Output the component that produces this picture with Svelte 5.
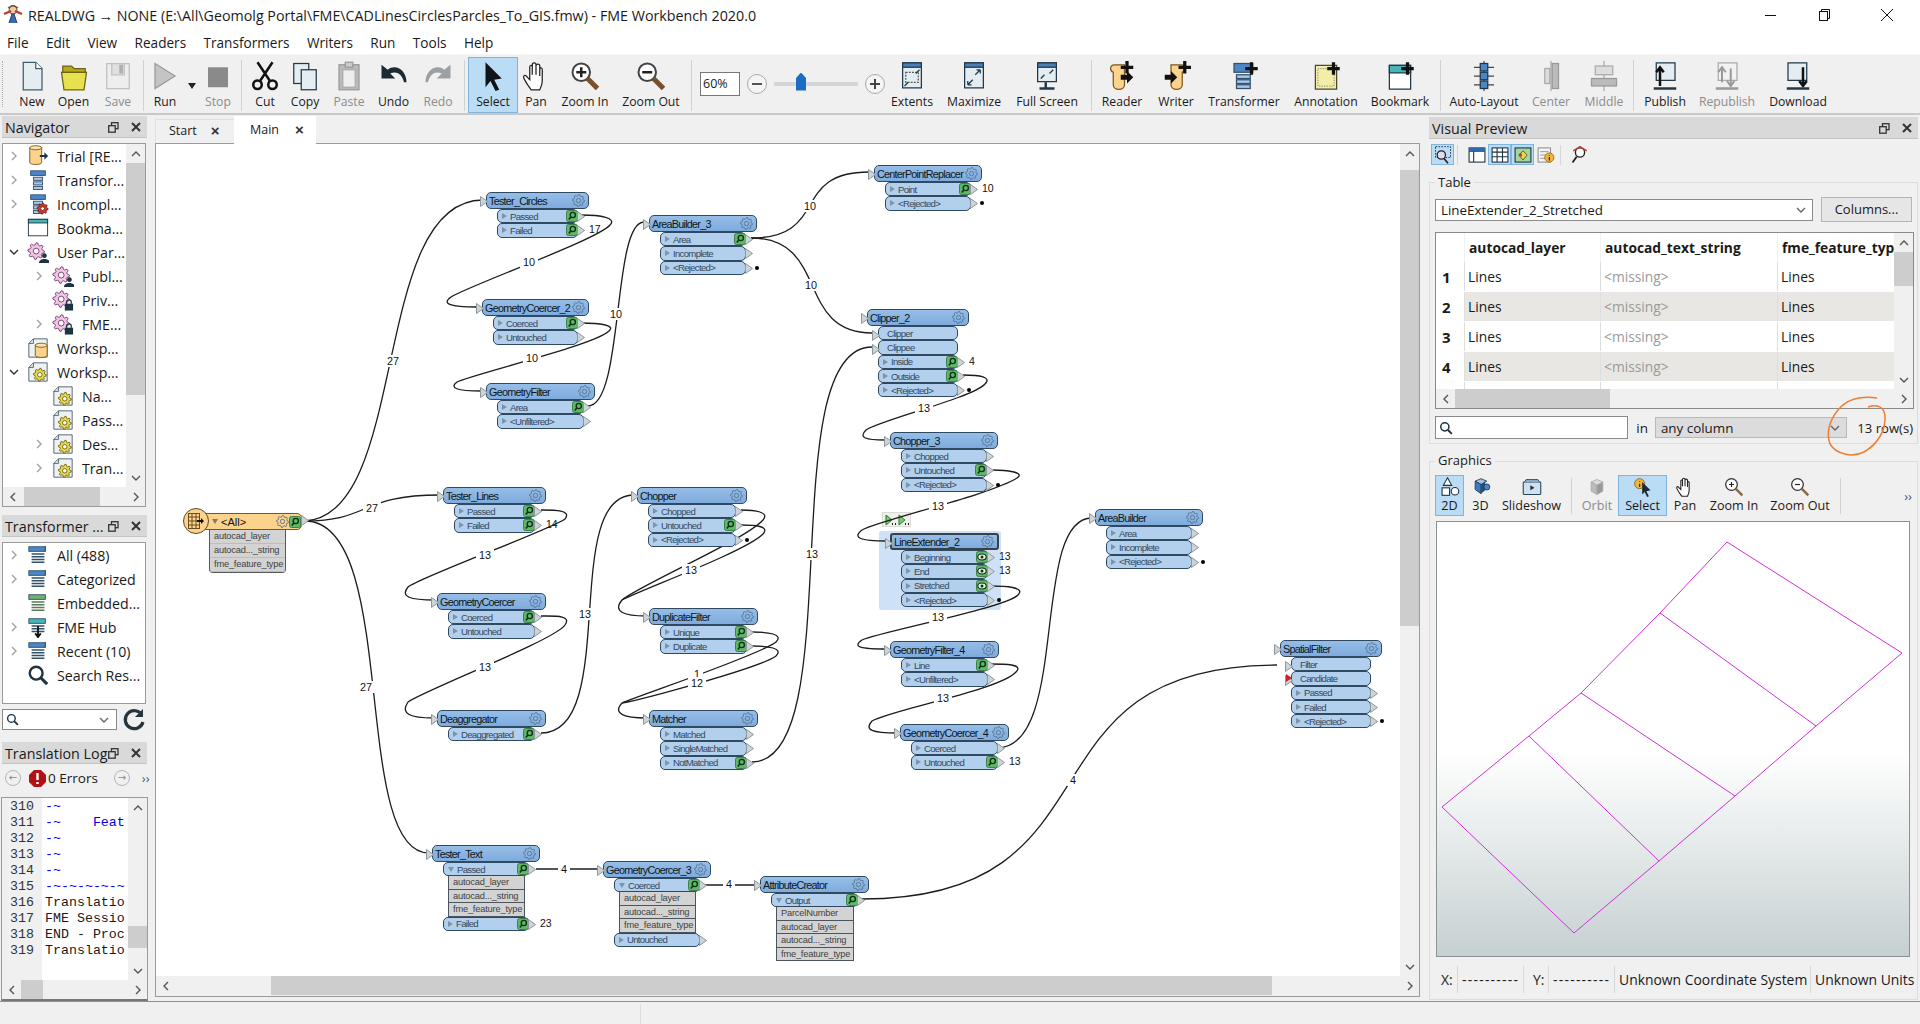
<script>
	// gear outline as polygon points
	function gear(cx, cy, r1, r2, n = 8) {
		const pts = [];
		for (let i = 0; i < n * 4; i++) {
			const a = (i / (n * 4)) * Math.PI * 2;
			const r = i % 4 < 2 ? r2 : r1;
			pts.push((cx + Math.cos(a) * r).toFixed(1) + ',' + (cy + Math.sin(a) * r).toFixed(1));
		}
		return pts.join(' ');
	}
	const gearA = (cx, cy, r, fill, st) =>
		`<polygon points="${gear(cx, cy, r * 0.75, r)}" fill="${fill}" stroke="${st}"/><circle cx="${cx}" cy="${cy}" r="${r * 0.35}" fill="#fff" stroke="${st}"/>`;
	const plus = (x, y) => `<path d="M${x} ${y - 5}v10M${x - 5} ${y}h10" stroke="#111" stroke-width="2.6"/>`;
	const win = (hd = '#4a7fb5') =>
		`<rect x="4.5" y="1.5" width="15" height="20" fill="#e4edf1" stroke="#20384a"/><rect x="4.5" y="1.5" width="15" height="3.5" fill="${hd}" stroke="#20384a"/>`;
	const stack = (a, b) =>
		`<rect x="4" y="2" width="16" height="5" fill="${a}" stroke="#33506a"/><rect x="7" y="9" width="10" height="3.4" fill="${b}" stroke="#33506a"/><rect x="7" y="14" width="10" height="3.4" fill="${b}" stroke="#33506a"/><rect x="7" y="19" width="10" height="3.4" fill="${b}" stroke="#33506a"/>`;
	const page = `<path d="M2 7l5-5h15v20H2z" fill="#eef2f4" stroke="#4a5f6b"/><path d="M7 2v5H2" fill="none" stroke="#4a5f6b"/>`;
	const cyl = (x, y, w, h) =>
		`<path d="M${x} ${y + 2}v${h - 4}c0 3 ${w} 3 ${w} 0v-${h - 4}z" fill="#fbd38d" stroke="#7a5a20"/><ellipse cx="${x + w / 2}" cy="${y + 2}" rx="${w / 2}" ry="2.2" fill="#fde3b0" stroke="#7a5a20"/>`;
	const user = `<circle cx="19" cy="16" r="2.6" fill="#1e3442"/><path d="M13 24c0-6 12-6 12 0z" fill="#1e3442"/>`;
	const lock = `<rect x="14" y="16" width="9" height="7.5" fill="#1e3442"/><path d="M16 16v-2c0-3 5-3 5 0v2" fill="none" stroke="#1e3442" stroke-width="1.4"/>`;

	const icons = {
		new: `<path d="M5 1h10l5 5v17H5z" fill="#e4edf1" stroke="#3f5d6b"/><path d="M15 1v5h5" fill="#fff" stroke="#3f5d6b"/>`,
		open: `<path d="M3 9V4h7l2 2h9v3z" fill="#b9a91f" stroke="#6d6415"/><path d="M2 9h20l-2 14H4z" fill="#e7e04f" stroke="#6d6415"/>`,
		save: `<path d="M3 2h18v20H3z" fill="#eee" stroke="#c0c0c0"/><path d="M7 2h10v9H7z" fill="#e0e0e0" stroke="#c0c0c0"/><rect x="13" y="3" width="3" height="7" fill="#b0b0b0"/>`,
		run: `<path d="M4 2l16 10L4 22z" fill="#c4c4c4" stroke="#9a9a9a"/>`,
		stop: `<rect x="4" y="5" width="16" height="16" fill="#8a8a8a"/>`,
		cut: `<path d="M6 1l10 15M18 1L8 16" stroke="#111" stroke-width="2" fill="none"/><circle cx="6" cy="19" r="3.4" fill="none" stroke="#111" stroke-width="2"/><circle cx="18" cy="19" r="3.4" fill="none" stroke="#111" stroke-width="2"/>`,
		copy: `<rect x="3" y="2" width="12" height="16" fill="#e4edf1" stroke="#20384a"/><rect x="9" y="7" width="12" height="16" fill="#e4edf1" stroke="#20384a"/>`,
		paste: `<rect x="4" y="3" width="16" height="20" fill="#bbb" stroke="#999"/><rect x="7" y="7" width="10" height="14" fill="#eee" stroke="#aaa"/><rect x="9" y="1" width="6" height="4" fill="#ccc" stroke="#999"/>`,
		undo: `<path d="M2 3v11h11l-4-4c4-2 9-1 11 7h2C22 7 13 2 7 7z" fill="#1c2a33"/>`,
		redo: `<path d="M22 3v11H11l4-4c-4-2-9-1-11 7H2C2 7 11 2 17 7z" fill="#9aa0a3"/>`,
		select: `<path d="M6 1l13 13-6 1 4 8-3 1-4-8-4 5z" fill="#0e1418"/>`,
		pan: `<path d="M8 23c-2-3-5-7-6-10 0-2 2-2 3 0l2 2V5c0-2 2-2 2 0v6V3c0-2 3-2 3 0v8V4c0-2 3-2 3 0v8V7c0-2 2-2 2 0v9c0 3-1 5-2 7z" fill="#fff" stroke="#222"/>`,
		zoomin: `<circle cx="9" cy="9" r="7" fill="#fff" stroke="#444" stroke-width="1.6"/><path d="M5 9h8M9 5v8" stroke="#222" stroke-width="2"/><path d="M14 14l8 8" stroke="#7a4f2a" stroke-width="4"/>`,
		zoomout: `<circle cx="9" cy="9" r="7" fill="#fff" stroke="#444" stroke-width="1.6"/><path d="M5 9h8" stroke="#222" stroke-width="2"/><path d="M14 14l8 8" stroke="#7a4f2a" stroke-width="4"/>`,
		extents: win() + `<rect x="7" y="9" width="10" height="8" fill="none" stroke="#555" stroke-dasharray="1.5 1"/><path d="M6 20l3-3M18 7l-3 3" stroke="#20384a"/>`,
		maximize: win() + `<path d="M7 19l4-4M7 19v-3M7 19h3M17 7l-4 4M17 7v3M17 7h-3" stroke="#20384a" fill="none"/>`,
		full: `<rect x="4.5" y="1.5" width="15" height="15" fill="#e4edf1" stroke="#20384a"/><rect x="4.5" y="1.5" width="15" height="3.5" fill="#4a7fb5" stroke="#20384a"/><path d="M7 14l3-3M17 7l-3 3" stroke="#20384a"/><path d="M11 17v4M6 22h12" stroke="#20384a" stroke-width="2"/>`,
		reader: `<path d="M6 3c-4 0-4 5-1 6v10c0 5 9 5 9 0V3z" fill="#fbd38d" stroke="#7a5a20"/><path d="M11 11h5v-3l5 5-5 5v-3h-5z" fill="#111"/>` + plus(16, 5),
		writer: `<path d="M16 3c4 0 4 5 1 6v10c0 5-9 5-9 0V3z" fill="#fbd38d" stroke="#7a5a20"/><path d="M3 11h5V8l5 5-5 5v-3H3z" fill="#111"/>` + plus(19, 5),
		transformer: `<rect x="4" y="2" width="15" height="7" fill="#4a86c8" stroke="#33506a"/><rect x="6" y="11" width="11" height="3" fill="#a9c8ea" stroke="#33506a"/><rect x="6" y="15" width="11" height="3" fill="#a9c8ea" stroke="#33506a"/><rect x="6" y="19" width="11" height="3" fill="#a9c8ea" stroke="#33506a"/>` + plus(18, 6),
		annotation: `<rect x="3.5" y="3.5" width="17" height="19" fill="#f3eda6" stroke="#4a4a2a"/><rect x="5.5" y="6" width="13" height="14" fill="none" stroke="#999" stroke-dasharray="1 1"/>` + plus(18, 6),
		bookmark: `<rect x="3.5" y="3.5" width="17" height="19" fill="#fff" stroke="#20384a"/><rect x="3.5" y="3.5" width="17" height="6" fill="#45b5b8" stroke="#20384a"/>` + plus(18, 6),
		autolayout: `<path d="M12 0v24M4 5h16M4 12h16M4 19h16" stroke="#444"/><rect x="9" y="2" width="6" height="6" fill="#4a86c8" stroke="#20384a"/><rect x="9" y="9" width="6" height="6" fill="#4a86c8" stroke="#20384a"/><rect x="9" y="16" width="6" height="6" fill="#4a86c8" stroke="#20384a"/>`,
		center: `<path d="M12 0v24" stroke="#aaa"/><rect x="7" y="6" width="4" height="12" fill="#ddd" stroke="#aaa"/><rect x="13" y="2" width="5" height="20" fill="#bbb" stroke="#999"/>`,
		middle: `<path d="M12 0v24" stroke="#aaa"/><rect x="5" y="4" width="14" height="7" fill="#ddd" stroke="#aaa"/><rect x="2" y="14" width="20" height="6" fill="#bbb" stroke="#999"/>`,
		publish: `<rect x="5" y="1.5" width="15" height="14" fill="#e4edf1" stroke="#20384a"/><path d="M8 20V6M5 9l3-4 3 4" stroke="#111" stroke-width="2" fill="none"/><path d="M3 22h18" stroke="#20384a" stroke-width="2"/>`,
		republish: `<rect x="5" y="1.5" width="15" height="14" fill="#f2f2f2" stroke="#aaa"/><path d="M8 17V6M5 9l3-4 3 4M15 6v13M12 16l3 4 3-4" stroke="#999" stroke-width="1.6" fill="none"/><path d="M3 22h18" stroke="#999" stroke-width="2"/>`,
		download: `<rect x="4" y="1.5" width="15" height="14" fill="#e4edf1" stroke="#20384a"/><path d="M16 5v14M13 16l3 4 3-4" stroke="#111" stroke-width="2" fill="none"/><path d="M3 22h18" stroke="#20384a" stroke-width="2"/>`,
		// tree icons
		db: cyl(3, 1, 13, 20) + `<path d="M14 11h5V8l4 4-4 4v-3h-5z" fill="#1e3442"/>`,
		stack: stack('#4a86c8', '#a9c8ea'),
		stackgear: stack('#4a86c8', '#a9c8ea') + gearA(17, 17, 6, '#d0392b', '#7a1f18'),
		bmark: `<rect x="1.5" y="2.5" width="21" height="18" fill="#fff" stroke="#20384a"/><rect x="1.5" y="2.5" width="21" height="4" fill="#45b5b8" stroke="#20384a"/>`,
		gearuser: gearA(10, 11, 9, '#efc6e6', '#7a3d72') + user,
		gearlock: gearA(10, 11, 9, '#efc6e6', '#7a3d72') + lock,
		wsdb: page + cyl(9, 7, 13, 15),
		wsgear: page + gearA(14, 15, 7, '#e8d94a', '#6d6415'),
		stackblue: `<rect x="2" y="3" width="18" height="5" fill="#4a86c8" stroke="#33506a"/><path d="M5 11h14M5 14h14M5 17h14M5 20h14" stroke="#33506a" stroke-width="1.6"/><path d="M20 2v6" stroke="#33506a"/>`,
		stackgreen: `<rect x="2" y="3" width="18" height="5" fill="#6db36a" stroke="#33506a"/><path d="M5 11h14M5 14h14M5 17h14M5 20h14" stroke="#5a7a5a" stroke-width="1.6"/>`,
		stackteal: `<rect x="2" y="3" width="18" height="5" fill="#45b5b8" stroke="#33506a"/><path d="M5 11h14M5 14h14M5 17h14" stroke="#33506a" stroke-width="1.6"/><path d="M12 11v11M9 19l3 4 3-4" stroke="#111" stroke-width="2" fill="none"/>`,
		search: `<circle cx="10" cy="10" r="7" fill="none" stroke="#1e3442" stroke-width="2.6"/><path d="M15 15l7 7" stroke="#1e3442" stroke-width="3.4"/>`,
		// visual preview toolbar
		preview: `<rect x="3" y="2" width="18" height="13" fill="none" stroke="#222" stroke-dasharray="2 1.5"/><circle cx="10" cy="12" r="5" fill="#dde" stroke="#222" stroke-width="1.5"/><path d="M13 16l5 6" stroke="#222" stroke-width="2"/>`,
		layout: `<rect x="2.5" y="3.5" width="19" height="17" fill="#fff" stroke="#1e3442" stroke-width="1.3"/><path d="M2.5 7.5h19M8 7.5v13" stroke="#1e3442" stroke-width="1.3"/><rect x="2.5" y="3.5" width="19" height="4" fill="#2b6cb0"/>`,
		grid: `<rect x="2.5" y="3.5" width="19" height="17" fill="#fff" stroke="#1e3442" stroke-width="1.3"/><path d="M2.5 8.5h19M2.5 14h19M8.5 3.5v17M15 3.5v17" stroke="#1e3442" stroke-width="1.3"/>`,
		gfx: `<rect x="2.5" y="3.5" width="19" height="17" fill="#a5d6a0" stroke="#1e3442" stroke-width="1.3"/><path d="M7 12l5-5 5 5-5 6z" fill="#e8d94a" stroke="#3a5a20"/><circle cx="9" cy="12" r="2" fill="#c0392b"/>`,
		info: `<rect x="2.5" y="3.5" width="15" height="17" fill="#f3f3f3" stroke="#777"/><path d="M5 8h10M5 12h6M5 16h6" stroke="#888"/><circle cx="16" cy="15" r="5.5" fill="#f0b63c" stroke="#8a6510"/><path d="M16 12v1M16 14.5v4" stroke="#222" stroke-width="1.4"/>`,
		fmeinsp: `<circle cx="12" cy="9" r="5.5" fill="#fff" stroke="#222" stroke-width="1.6"/><path d="M8 14l-5 7" stroke="#222" stroke-width="2.2"/><path d="M4 7l8-5 8 5" stroke="#c0392b" stroke-width="2" fill="none"/>`,
		d2: `<path d="M9 1l5 9H4z" fill="#fff" stroke="#1e3442" stroke-width="1.3"/><rect x="2.5" y="13" width="9" height="9" fill="#fff" stroke="#1e3442" stroke-width="1.3"/><circle cx="18" cy="17" r="4.5" fill="#fff" stroke="#1e3442" stroke-width="1.3"/>`,
		d3: `<path d="M5 5l7-3 7 3-7 4z" fill="#9fc2e6" stroke="#1e3442"/><path d="M5 5v10l7 5V9z" fill="#3a7abd" stroke="#1e3442"/><path d="M12 9v11l5-4V5z" fill="#20507f"/><circle cx="19" cy="12" r="3.6" fill="#4a86c8" stroke="#1e3442"/>`,
		slide: `<rect x="1.5" y="6" width="21" height="15" rx="1" fill="#cfe0ee" stroke="#26465e" stroke-width="1.3"/><path d="M3 6l2-3h14l2 3" fill="#8ea8bc" stroke="#26465e"/><path d="M10 10l5 3-5 3z" fill="#1e3442"/>`,
		orbit: `<path d="M5 6l7-3 7 3-7 4z" fill="#ddd" stroke="#aaa"/><path d="M5 6v11l7 4V10z" fill="#bbb" stroke="#aaa"/><path d="M12 10v11l7-4V6z" fill="#999" stroke="#aaa"/>`,
		gselect: `<circle cx="8" cy="8" r="6" fill="#f0b63c" stroke="#8a6510"/><path d="M8 5v1M8 8v4" stroke="#222" stroke-width="1.4"/><path d="M11 6l10 10-5 1 3 6-2 1-3-6-3 3z" fill="#1c2a33"/>`,
		gpan: `<path d="M8 23c-2-3-5-7-6-10 0-2 2-2 3 0l2 2V5c0-2 2-2 2 0v6V3c0-2 3-2 3 0v8V4c0-2 3-2 3 0v8V7c0-2 2-2 2 0v9c0 3-1 5-2 7z" fill="#fff" stroke="#222" stroke-width="1.3"/>`,
		gzin: `<circle cx="9" cy="9" r="7" fill="#fff" stroke="#333" stroke-width="1.5"/><path d="M6 9h6M9 6v6" stroke="#222" stroke-width="1.4"/><path d="M14 14l8 8" stroke="#8a6a45" stroke-width="3"/>`,
		gzout: `<circle cx="9" cy="9" r="7" fill="#fff" stroke="#333" stroke-width="1.5"/><path d="M6 9h6" stroke="#222" stroke-width="1.4"/><path d="M14 14l8 8" stroke="#8a6a45" stroke-width="3"/>`
	};

	const tools = [
		{ grip: 1, w: 10 },
		{ l: 'New', ic: 'new', w: 40 }, { l: 'Open', ic: 'open', w: 43 }, { l: 'Save', ic: 'save', w: 46, off: 1 }, { sep: 1, w: 5 },
		{ l: 'Run', ic: 'run', w: 38 }, { caret: 1, w: 16 }, { l: 'Stop', ic: 'stop', w: 36, off: 1 }, { sep: 1, w: 11 },
		{ l: 'Cut', ic: 'cut', w: 36 }, { l: 'Copy', ic: 'copy', w: 44 }, { l: 'Paste', ic: 'paste', w: 44, off: 1 }, { l: 'Undo', ic: 'undo', w: 45 }, { l: 'Redo', ic: 'redo', w: 44, off: 1 }, { sep: 1, w: 8 },
		{ l: 'Select', ic: 'select', w: 50, on: 1 }, { l: 'Pan', ic: 'pan', w: 36 }, { l: 'Zoom In', ic: 'zoomin', w: 62 }, { l: 'Zoom Out', ic: 'zoomout', w: 70 }, { sep: 1, w: 10 },
		{ zoom: 1, w: 194 },
		{ l: 'Extents', ic: 'extents', w: 44 }, { l: 'Maximize', ic: 'maximize', w: 80 }, { l: 'Full Screen', ic: 'full', w: 66 }, { sep: 1, w: 22 },
		{ l: 'Reader', ic: 'reader', w: 40 }, { l: 'Writer', ic: 'writer', w: 68 }, { l: 'Transformer', ic: 'transformer', w: 68 }, { l: 'Annotation', ic: 'annotation', w: 96 }, { l: 'Bookmark', ic: 'bookmark', w: 52 }, { sep: 1, w: 28 },
		{ l: 'Auto-Layout', ic: 'autolayout', w: 60 }, { l: 'Center', ic: 'center', w: 74, off: 1 }, { l: 'Middle', ic: 'middle', w: 32, off: 1 }, { sep: 1, w: 26 },
		{ l: 'Publish', ic: 'publish', w: 38 }, { l: 'Republish', ic: 'republish', w: 86, off: 1 }, { l: 'Download', ic: 'download', w: 56 }
	];

	const gfxTools = [
		{ l: '2D', ic: 'd2', w: 29, on: 1 }, { l: '3D', ic: 'd3', w: 33 }, { l: 'Slideshow', ic: 'slide', w: 69 }, { sep: 1, w: 10 },
		{ l: 'Orbit', ic: 'orbit', w: 42, off: 1 }, { l: 'Select', ic: 'gselect', w: 49, on: 1 }, { l: 'Pan', ic: 'gpan', w: 36 }, { l: 'Zoom In', ic: 'gzin', w: 62 }, { l: 'Zoom Out', ic: 'gzout', w: 70 }, { sep: 1, w: 10 }
	];

	const menu = ['File', 'Edit', 'View', 'Readers', 'Transformers', 'Writers', 'Run', 'Tools', 'Help'];

	const navTree = [
		{ l: 'Trial [RE...', ic: 'db', ch: 'r', lv: 0 },
		{ l: 'Transfor...', ic: 'stack', ch: 'r', lv: 0 },
		{ l: 'Incompl...', ic: 'stackgear', ch: 'r', lv: 0 },
		{ l: 'Bookma...', ic: 'bmark', lv: 0 },
		{ l: 'User Par...', ic: 'gearuser', ch: 'd', lv: 0 },
		{ l: 'Publ...', ic: 'gearuser', ch: 'r', lv: 1 },
		{ l: 'Priv...', ic: 'gearlock', lv: 1 },
		{ l: 'FME...', ic: 'gearlock', ch: 'r', lv: 1 },
		{ l: 'Worksp...', ic: 'wsdb', lv: 0 },
		{ l: 'Worksp...', ic: 'wsgear', ch: 'd', lv: 0 },
		{ l: 'Na...', ic: 'wsgear', lv: 1 },
		{ l: 'Pass...', ic: 'wsgear', lv: 1 },
		{ l: 'Des...', ic: 'wsgear', ch: 'r', lv: 1 },
		{ l: 'Tran...', ic: 'wsgear', ch: 'r', lv: 1 }
	];

	const xfTree = [
		{ l: 'All (488)', ic: 'stackblue', ch: 'r', lv: 0 },
		{ l: 'Categorized', ic: 'stackblue', ch: 'r', lv: 0 },
		{ l: 'Embedded...', ic: 'stackgreen', lv: 0 },
		{ l: 'FME Hub', ic: 'stackteal', ch: 'r', lv: 0 },
		{ l: 'Recent (10)', ic: 'stackblue', ch: 'r', lv: 0 },
		{ l: 'Search Res...', ic: 'search', lv: 0 }
	];

	const log = [
		['310', '-~', 1], ['311', '-~    Feat', 1], ['312', '-~', 1], ['313', '-~', 1], ['314', '-~', 1],
		['315', '-~-~-~-~-~', 1], ['316', 'Translatio'], ['317', 'FME Sessio'], ['318', 'END - Proc'], ['319', 'Translatio']
	];

	const attrs3 = [{ a: 'autocad_layer' }, { a: 'autocad..._string' }, { a: 'fme_feature_type' }];

	const nodes = [
		{ n: 'Tester_Circles', x: 486, y: 192, w: 103, ports: [{ l: 'Passed', i: 1 }, { l: 'Failed', i: 1, c: '17' }] },
		{ n: 'GeometryCoercer_2', x: 482, y: 299, w: 107, ports: [{ l: 'Coerced', i: 1 }, { l: 'Untouched' }] },
		{ n: 'GeometryFilter', x: 486, y: 383, w: 109, ports: [{ l: 'Area', i: 1 }, { l: '<Unfiltered>' }] },
		{ n: 'AreaBuilder_3', x: 649, y: 215, w: 108, ports: [{ l: 'Area', i: 1 }, { l: 'Incomplete' }, { l: '<Rejected>', d: 1 }] },
		{ n: 'CenterPointReplacer', x: 874, y: 165, w: 108, ports: [{ l: 'Point', i: 1, c: '10' }, { l: '<Rejected>', d: 1 }] },
		{ n: 'Clipper_2', x: 867, y: 309, w: 102, ports: [{ l: 'Clipper', in: 1 }, { l: 'Clippee', in: 1 }, { l: 'Inside', i: 1, c: '4' }, { l: 'Outside', i: 1 }, { l: '<Rejected>', d: 1 }] },
		{ n: 'Chopper_3', x: 890, y: 432, w: 108, ports: [{ l: 'Chopped' }, { l: 'Untouched', i: 1 }, { l: '<Rejected>', d: 1 }] },
		{ n: 'LineExtender_2', x: 890, y: 533, w: 109, sel: 1, ports: [{ l: 'Beginning', e: 1, c: '13' }, { l: 'End', e: 1, c: '13' }, { l: 'Stretched', e: 1 }, { l: '<Rejected>', d: 1 }] },
		{ n: 'GeometryFilter_4', x: 890, y: 641, w: 109, ports: [{ l: 'Line', i: 1 }, { l: '<Unfiltered>' }] },
		{ n: 'GeometryCoercer_4', x: 900, y: 724, w: 109, ports: [{ l: 'Coerced' }, { l: 'Untouched', i: 1, c: '13' }] },
		{ n: 'AreaBuilder', x: 1095, y: 509, w: 108, ports: [{ l: 'Area' }, { l: 'Incomplete' }, { l: '<Rejected>', d: 1 }] },
		{ n: 'SpatialFilter', x: 1280, y: 640, w: 102, ports: [{ l: 'Filter', in: 1 }, { l: 'Candidate', in: 1, red: 1 }, { l: 'Passed' }, { l: 'Failed' }, { l: '<Rejected>', d: 1 }] },
		{ n: 'Tester_Lines', x: 443, y: 487, w: 103, ports: [{ l: 'Passed', i: 1 }, { l: 'Failed', i: 1, c: '14' }] },
		{ n: 'GeometryCoercer', x: 437, y: 593, w: 109, ports: [{ l: 'Coerced', i: 1 }, { l: 'Untouched' }] },
		{ n: 'Deaggregator', x: 437, y: 710, w: 109, ports: [{ l: 'Deaggregated', i: 1 }] },
		{ n: 'Chopper', x: 637, y: 487, w: 110, ports: [{ l: 'Chopped' }, { l: 'Untouched', i: 1 }, { l: '<Rejected>', d: 1 }] },
		{ n: 'DuplicateFilter', x: 649, y: 608, w: 109, ports: [{ l: 'Unique', i: 1 }, { l: 'Duplicate', i: 1 }] },
		{ n: 'Matcher', x: 649, y: 710, w: 109, ports: [{ l: 'Matched' }, { l: 'SingleMatched' }, { l: 'NotMatched', i: 1 }] },
		{ n: 'Tester_Text', x: 432, y: 845, w: 108, ports: [{ l: 'Passed', i: 1, open: 1 }, ...attrs3, { l: 'Failed', i: 1, c: '23' }] },
		{ n: 'GeometryCoercer_3', x: 603, y: 861, w: 108, ports: [{ l: 'Coerced', i: 1, open: 1 }, ...attrs3, { l: 'Untouched' }] },
		{ n: 'AttributeCreator', x: 760, y: 876, w: 109, ports: [{ l: 'Output', i: 1, open: 1 }, { a: 'ParcelNumber' }, ...attrs3] }
	];

	const wires = [
		'M305 521C410 515 370 200 483 200',
		'M305 521C370 521 360 495 440 495',
		'M305 521C400 521 350 853 429 853',
		'M581 215C601 215 617 218 610 225C597 240 470 285 451 297C441 304 451 307 476 307',
		'M581 323C599 323 616 325 609 331C595 345 470 375 457 382C449 388 456 391 482 391',
		'M588 406C624 406 612 222 644 222',
		'M751 238C830 238 790 172 869 172',
		'M751 238C830 238 795 333 872 333',
		'M963 375C980 375 992 377 985 384C972 398 880 420 866 430C858 438 866 440 885 440',
		'M752 762C850 762 772 347 872 347',
		'M993 470C1005 470 1026 472 1017 478C990 495 880 520 862 530C852 538 860 541 887 541',
		'M990 586C1005 586 1026 587 1018 595C1005 608 880 632 862 640C852 647 860 649 887 649',
		'M990 664C1005 664 1024 664 1016 672C1000 690 890 710 872 721C864 730 872 733 897 733',
		'M997 748C1070 748 1030 518 1092 518',
		'M862 899C1130 899 1010 665 1277 665',
		'M536 869H600',
		'M703 885H757',
		'M541 510C555 510 572 510 565 519C550 530 425 575 408 587C400 597 410 600 435 600',
		'M541 616C555 616 572 615 565 625C555 640 425 690 408 702C400 714 410 718 434 718',
		'M541 733C620 733 560 495 634 495',
		'M741 510C755 510 770 512 763 520C745 540 640 585 622 600C612 612 625 616 646 616',
		'M741 525C755 525 770 526 763 534C745 552 640 590 622 600',
		'M752 632C768 632 784 634 776 642C760 655 640 695 622 703C612 714 625 718 646 718',
		'M752 646C768 646 784 648 776 656C760 668 640 700 622 703'
	];

	const labels = [
		['27', 393, 361], ['27', 372, 508], ['27', 366, 687], ['10', 529, 262], ['10', 532, 358], ['10', 616, 314],
		['10', 810, 206], ['10', 811, 285], ['13', 924, 408], ['13', 812, 554], ['13', 938, 506], ['13', 938, 617],
		['13', 943, 698], ['4', 1073, 780], ['4', 564, 869], ['4', 729, 884], ['13', 485, 555], ['13', 485, 667],
		['13', 585, 614], ['13', 691, 570], ['1', 697, 674], ['12', 697, 683]
	];
</script>

{#snippet icon(name, size = 24)}
	<svg class="ic" width={size} height={size} viewBox="0 0 24 24">{@html icons[name]}</svg>
{/snippet}

{#snippet chev(dir, color = '#555')}
	<svg class="chev" width="10" height="10" viewBox="0 0 10 10" fill="none" stroke={color} stroke-width="1.4">
		{#if dir === 'r'}<path d="M3 1l4 4-4 4" />{:else if dir === 'l'}<path d="M7 1L3 5l4 4" />{:else if dir === 'u'}<path d="M1 7l4-4 4 4" />{:else}<path d="M1 3l4 4 4-4" />{/if}
	</svg>
{/snippet}

{#snippet vbar(top, h)}
	<div class="vbar">
		<div class="sb-btn">{@render chev('u')}</div>
		<div class="sb-track"><div class="vthumb" style="top:{top}px;height:{h}px"></div></div>
		<div class="sb-btn">{@render chev('d')}</div>
	</div>
{/snippet}

{#snippet hbar(left, w)}
	<div class="hbar">
		<div class="sb-btn">{@render chev('l')}</div>
		<div class="sb-track"><div class="hthumb" style="left:{left}px;width:{w}px"></div></div>
		<div class="sb-btn">{@render chev('r')}</div>
	</div>
{/snippet}

{#snippet dockHead(title)}
	<div class="dock-head">
		<span class="dock-title">{title}</span>
		<svg class="restore" width="11" height="11" viewBox="0 0 11 11" fill="none" stroke="#333" stroke-width="1.3"><rect x="3.5" y="0.7" width="6.5" height="6" /><rect x="0.7" y="3.7" width="6.5" height="6.5" fill="#d9d9d9" /></svg>
		<svg class="closer" width="10" height="10" viewBox="0 0 10 10" stroke="#333" stroke-width="2"><path d="M1 1l8 8M9 1l-8 8" /></svg>
	</div>
{/snippet}

{#snippet tree(rows)}
	{#each rows as r}
		<div class="tree-row" class:lv1={r.lv === 1}>
			<span class="tree-ch">{#if r.ch}{@render chev(r.ch, r.ch === 'd' ? '#333' : '#a0a0a0')}{/if}</span>
			{@render icon(r.ic, 22)}
			<span class="tree-l">{r.l}</span>
		</div>
	{/each}
{/snippet}

{#snippet tip()}
	<svg class="tip" width="8" height="11" viewBox="0 0 8 11"><path d="M.5.5l7 5-7 5z" fill="#cdd4d7" stroke="#8d979c" /></svg>
{/snippet}

{#snippet nodeGear()}
	<svg class="ngear" width="13" height="13" viewBox="0 0 24 24" fill="none" stroke="#54708c" stroke-width="1.6"><polygon points={gear(12, 12, 8.5, 11)} /><circle cx="12" cy="12" r="4" /></svg>
{/snippet}

{#snippet insp(eye)}
	<svg class="insp" width="12" height="12" viewBox="0 0 12 12">
		<rect x=".5" y=".5" width="11" height="11" rx="2" fill="#5fb865" stroke="#3e7f4c" />
		{#if eye}
			<ellipse cx="6" cy="6" rx="4.2" ry="3" fill="#e8f3e8" stroke="#12301c" stroke-width="1.1" /><circle cx="6" cy="6" r="1.5" fill="#12301c" />
		{:else}
			<circle cx="6.8" cy="5" r="2.6" fill="none" stroke="#12301c" stroke-width="1.4" /><path d="M4.8 7l-2 2.6" stroke="#12301c" stroke-width="1.6" />
		{/if}
	</svg>
{/snippet}

<div class="app">
	<header class="title">
		<svg class="logo" width="22" height="20" viewBox="0 0 22 20"><circle cx="11" cy="5" r="4" fill="#f2c9a0" stroke="#7a5a3a" /><path d="M2 9l7-3M20 9l-7-3" stroke="#c0392b" stroke-width="2.4" /><path d="M7 18l3-9h2l3 9" fill="#3a6ab0" stroke="#26406e" /><path d="M6 3l5-3 5 3" fill="none" stroke="#555" stroke-width="1.4" /></svg>
		<span class="title-text">REALDWG → NONE (E:\All\Geomolg Portal\FME\CADLinesCirclesParcles_To_GIS.fmw) - FME Workbench 2020.0</span>
		<div class="win-btns">
			<svg width="14" height="14" viewBox="0 0 14 14" stroke="#111"><path d="M1 7.5h11" /></svg>
			<svg width="14" height="14" viewBox="0 0 14 14" stroke="#111" fill="none"><rect x="1.5" y="3.5" width="8" height="9" /><path d="M3.5 3.5v-2h8v9h-2" /></svg>
			<svg width="14" height="14" viewBox="0 0 14 14" stroke="#111"><path d="M1 1l12 12M13 1L1 13" /></svg>
		</div>
	</header>
	<nav class="menu">
		{#each menu as m}<span>{m}</span>{/each}
	</nav>

	<div class="toolbar">
		{#each tools as t}
			{#if t.grip}
				<div class="grip" style="width:{t.w}px"></div>
			{:else if t.sep}
				<div class="tsep" style="width:{t.w}px"><i></i></div>
			{:else if t.caret}
				<div class="caret" style="width:{t.w}px"><i></i></div>
			{:else if t.zoom}
				<div class="zoombox" style="width:{t.w}px">
					<span class="pct">60%</span>
					<span class="zcirc"><svg width="12" height="12" viewBox="0 0 12 12" stroke="#555" stroke-width="2"><path d="M1 6h10" /></svg></span>
					<span class="slider"><i class="thumb"></i></span>
					<span class="zcirc"><svg width="12" height="12" viewBox="0 0 12 12" stroke="#444" stroke-width="2"><path d="M1 6h10M6 1v10" /></svg></span>
				</div>
			{:else}
				<div class="tool" class:on={t.on} class:off={t.off} style="width:{t.w}px">
					{@render icon(t.ic, 30)}
					<span>{t.l}</span>
				</div>
			{/if}
		{/each}
	</div>

	<main class="main">
		<aside class="left">
			{@render dockHead('Navigator')}
			<div class="box nav-box">
				<div class="box-row">
					<div class="tree-body">{@render tree(navTree)}</div>
					{@render vbar(0, 232)}
				</div>
				{@render hbar(2, 76)}
			</div>
			{@render dockHead('Transformer ...')}
			<div class="box xf-box"><div class="tree-body">{@render tree(xfTree)}</div></div>
			<div class="search-row">
				<div class="search-combo">
					{@render icon('search', 13)}
					<span class="grow"></span>
					{@render chev('d', '#666')}
				</div>
				<svg width="24" height="24" viewBox="0 0 24 24" fill="none" stroke="#26343d" stroke-width="3.2"><path d="M20 7A9 9 0 1 0 21 14" /><path d="M21 1v8h-8" fill="#26343d" stroke="none" /></svg>
			</div>
			{@render dockHead('Translation Log')}
			<div class="err-row">
				<span class="nav-circ">←</span>
				<svg width="17" height="17" viewBox="0 0 17 17"><polygon points="5,0 12,0 17,5 17,12 12,17 5,17 0,12 0,5" fill="#b01116" /><path d="M8.5 3v7M8.5 12v2" stroke="#fff" stroke-width="2.4" /></svg>
				<span class="err-txt">0 Errors</span>
				<span class="nav-circ fwd">→</span>
				<span class="more">››</span>
			</div>
			<div class="box log-box">
				<div class="box-row">
					<div class="gutter">{#each log as l}<div>{l[0]}</div>{/each}</div>
					<div class="log-body">{#each log as l}<div class:blue={l[2]}>{l[1]}</div>{/each}</div>
					{@render vbar(109, 22)}
				</div>
				{@render hbar(0, 22)}
			</div>
		</aside>

		<section class="center">
			<div class="tabs">
				<div class="tab"><span>Start</span><b>×</b></div>
				<div class="tab cur"><span>Main</span><b>×</b></div>
			</div>
			<div class="frame">
				<div class="frame-row">
					<div class="canvas">
						<div class="plane">
							<div class="sel-bg"></div>
							<div class="mini-tb">
								{#each [0, 1] as k (k)}
									<svg width="12" height="12" viewBox="0 0 12 12"><path d="M2 1l6 5-6 5z" fill="#7fc97a" stroke="#2f7a3a" /><path d="M8 10h1M11 10h1" stroke="#222" stroke-width="2" /></svg>
								{/each}
							</div>
							<svg class="wires" width="1500" height="1100" viewBox="0 0 1500 1100" fill="none" stroke="#1c1c1c" stroke-width="1.3">
								{#each wires as d}<path {d} />{/each}
							</svg>

							<div class="src">
								<div class="src-circle">
									<svg width="18" height="18" viewBox="0 0 18 18" fill="#fbd38d" stroke="#6b4e1c"><rect x="1.5" y="1.5" width="11" height="15" /><path d="M1.5 5h11M1.5 9h11M1.5 13h11M5 1.5v15M9 1.5v15" /><path d="M10 8h4v-2l3 3-3 3v-2h-4z" fill="#111" stroke="none" /></svg>
								</div>
								<div class="src-head">
									<span class="tri-d src-tri"></span>
									<span class="src-name">&lt;All&gt;</span>
									{@render nodeGear()}
									{@render insp(false)}
									{@render tip()}
								</div>
								<div class="src-attrs">
									{#each attrs3 as a}<div>{a.a}</div>{/each}
								</div>
							</div>

							{#each nodes as n}
								<div class="node" style="left:{n.x}px;top:{n.y}px;width:{n.w}px">
									<div class="head" class:sel={n.sel}>
										<span class="in-tip">{@render tip()}</span>
										<span class="name">{n.n}</span>
										{@render nodeGear()}
									</div>
									{#each n.ports as p}
										{#if p.a}
											<div class="attr">{p.a}</div>
										{:else}
											<div class="port" class:inport={p.in}>
												{#if p.in}
													<span class="in-tip">{@render tip()}</span>
													{#if p.red}<i class="red"></i>{/if}
												{:else}
													<i class={p.open ? 'tri-d' : 'tri-r'}></i>
												{/if}
												<span class="plabel">{p.l}</span>
												{#if p.i}{@render insp(false)}{/if}
												{#if p.e}{@render insp(true)}{/if}
												{#if !p.in}{@render tip()}{/if}
												{#if p.c}<span class="count">{p.c}</span>{/if}
												{#if p.d}<i class="dot"></i>{/if}
											</div>
										{/if}
									{/each}
								</div>
							{/each}

							{#each labels as [t, x, y]}
								<span class="wlabel" style="left:{x}px;top:{y}px">{t}</span>
							{/each}
						</div>
					</div>
					{@render vbar(7, 456)}
				</div>
				{@render hbar(96, 1001)}
			</div>
		</section>

		<aside class="right">
			{@render dockHead('Visual Preview')}
			<div class="vp-tools">
				<span class="vp-b on">{@render icon('preview', 20)}</span>
				<i class="vsep"></i>
				<span class="vp-b">{@render icon('layout', 20)}</span>
				<span class="vp-b on">{@render icon('grid', 20)}</span>
				<span class="vp-b on">{@render icon('gfx', 20)}</span>
				<span class="vp-b">{@render icon('info', 20)}</span>
				<i class="vsep"></i>
				<span class="vp-b">{@render icon('fmeinsp', 20)}</span>
			</div>

			<div class="group table-group">
				<span class="legend">Table</span>
				<div class="tbl-top">
					<div class="combo white tbl-combo"><span>LineExtender_2_Stretched</span>{@render chev('d', '#666')}</div>
					<div class="col-btn">Columns...</div>
				</div>
				<div class="tbl">
					<div class="tbl-row2">
						<div class="tbl-main">
							<div class="tr th"><span class="rn"></span><span class="c1">autocad_layer</span><span class="c2">autocad_text_string</span><span class="c3">fme_feature_typ</span></div>
							{#each [1, 2, 3, 4] as i}
								<div class="tr" class:alt={i % 2 === 0}>
									<span class="rn">{i}</span><span class="c1">Lines</span><span class="c2 miss">&lt;missing&gt;</span><span class="c3">Lines</span>
								</div>
							{/each}
							<div class="tr stub"><span class="rn"></span><span class="c1"></span><span class="c2"></span><span class="c3"></span></div>
						</div>
						{@render vbar(0, 34)}
					</div>
					{@render hbar(0, 155)}
				</div>
				<div class="tbl-search">
					<div class="search-in">{@render icon('search', 14)}</div>
					<span class="in">in</span>
					<div class="combo gray"><span>any column</span>{@render chev('d', '#666')}</div>
					<span class="rows">13 row(s)</span>
				</div>
			</div>

			<div class="group gfx-group">
				<span class="legend gfx-legend">Graphics</span>
				<div class="gfx-tb">
					{#each gfxTools as t}
						{#if t.sep}
							<div class="tsep" style="width:{t.w}px"><i></i></div>
						{:else}
							<div class="gtool" class:on={t.on} class:off={t.off} style="width:{t.w}px">
								{@render icon(t.ic, 20)}
								<span>{t.l}</span>
							</div>
						{/if}
					{/each}
					<span class="more gmore">››</span>
				</div>
				<div class="view">
					<svg width="472" height="434" viewBox="1438 523 472 434" fill="none" stroke="#d22fd8" stroke-width="1">
						<path d="M1728 543L1661 614L1582 694L1530 737L1443 808L1575 934L1660 862L1736 797L1817 727L1903 654Z" />
						<path d="M1661 614L1817 727M1582 694L1736 797M1530 737L1660 862" />
					</svg>
				</div>
				<div class="coord">
					<span class="c-x">X:</span><span class="c-v">----------</span><span class="c-y">Y:</span><span class="c-v">----------</span><span class="c-sys">Unknown Coordinate System</span><span class="c-u">Unknown Units</span>
				</div>
			</div>
		</aside>
	</main>

	<footer class="status"><i></i></footer>

	<svg class="scribble" width="70" height="70" viewBox="1820 390 70 70" fill="none" stroke="#ef7d31" stroke-width="1.5">
		<path d="M1877 398C1862 396 1848 398 1838 410C1830 420 1826 432 1830 444C1836 454 1852 458 1864 452C1878 444 1886 430 1885 416C1884 406 1876 404 1868 407" />
	</svg>
</div>

<style>
	:global(body) {
		margin: 0;
		font-family: 'Open Sans', 'Liberation Sans', sans-serif;
		color: #1a1a1a;
	}

	.app {
		position: relative;
		width: 1920px;
		height: 1024px;
		overflow: hidden;
		display: flex;
		flex-direction: column;
		background: #f0f0f0;
		font-size: 14px;
	}

	.title {
		height: 30px;
		flex: none;
		display: flex;
		align-items: center;
		background: #fff;
		padding-left: 2px;
	}
	.logo { margin-right: 4px; }
	.title-text { white-space: nowrap; font-size: 14.28px; }
	.win-btns {
		margin-left: auto;
		display: flex;
		gap: 50px;
		margin-right: 26px;
	}
	.win-btns svg:first-child { margin-right: -10px; }
	.win-btns svg:last-child { margin-left: -2px; }

	.menu {
		height: 25px;
		flex: none;
		display: flex;
		align-items: center;
		gap: 17.4px;
		padding-left: 7px;
		background: #fff;
		font-size: 13.6px;
		border-bottom: 1px solid #f5f5f5;
		box-sizing: border-box;
	}

	.toolbar {
		height: 60px;
		flex: none;
		display: flex;
		box-sizing: border-box;
		border-bottom: 2px solid #c8c8c8;
		padding-top: 2px;
	}
	.grip { border-left: 1px dotted #aaa; margin: 4px 0 6px 2px; box-sizing: border-box; flex: none; }
	.tsep { flex: none; display: flex; justify-content: center; align-items: stretch; padding: 3px 0 2px; box-sizing: border-box; }
	.tsep i { width: 1px; background: #d2d2d2; }
	.caret { flex: none; display: flex; justify-content: center; padding-top: 26px; box-sizing: border-box; }
	.caret i { width: 0; height: 0; border: 4.5px solid transparent; border-top: 6px solid #222; }
	.tool {
		flex: none;
		display: flex;
		flex-direction: column;
		align-items: center;
		font-size: 12.2px;
		line-height: 16px;
		white-space: nowrap;
		box-sizing: border-box;
		padding-top: 4px;
		gap: 3px;
	}
	.tool.on { background: #bbdcf5; outline: 1px solid #7fb4dd; outline-offset: -1px; }
	.tool.off { color: #8c8c8c; }
	.ic { display: block; flex: none; }

	.zoombox { flex: none; display: flex; align-items: center; box-sizing: border-box; padding: 0 4px 0 4px; margin-top: -3px; }
	.pct { width: 40px; height: 24px; box-sizing: border-box; border: 1px solid #777; background: #fff; font-size: 12.5px; line-height: 22px; padding-left: 2px; margin-right: 7px; }
	.zcirc { width: 20px; height: 20px; box-sizing: border-box; border: 1px solid #aaa; border-radius: 50%; display: flex; align-items: center; justify-content: center; flex: none; background: #f5f5f5; }
	.slider { position: relative; width: 84px; height: 4px; background: #d6d6d6; margin: 0 7px; flex: none; }
	.thumb { position: absolute; left: 22px; top: -9px; width: 10px; height: 18px; background: #1c6dc2; clip-path: polygon(50% 0, 100% 30%, 100% 100%, 0 100%, 0 30%); }

	.main { flex: 1; display: flex; min-height: 0; border-bottom: 1px solid #8f8f8f; }
	.status { height: 22px; flex: none; position: relative; }
	.status i { position: absolute; left: 640px; top: 2px; bottom: 0; width: 1px; background: #dcdcdc; }

	/* dock columns */
	.left { width: 150px; flex: none; box-sizing: border-box; padding: 1px 0 0 2px; display: flex; flex-direction: column; }
	.dock-head {
		height: 22px;
		flex: none;
		display: flex;
		align-items: center;
		background: #d9d9d9;
		padding: 1px 6px 0 3px;
		font-size: 14.3px;
		box-sizing: border-box;
		border-bottom: 1px solid #c4c4c4;
	}
	.dock-title { flex: 1; white-space: nowrap; min-width: 0; }
	.restore { margin-right: 12px; flex: none; }
	.closer { flex: none; }
	.left .dock-head { width: 145px; }
	.left .restore { margin-left: -8px; }

	.box { background: #fff; border: 1px solid #9a9a9a; box-sizing: border-box; width: 144px; display: flex; flex-direction: column; }
	.box-row { flex: 1; display: flex; min-height: 0; }
	.nav-box { height: 364px; margin-top: 5px; margin-bottom: 8px; }
	.xf-box { height: 162px; margin-top: 5px; }
	.tree-body { flex: 1; min-width: 0; overflow: hidden; }
	.tree-row { height: 24px; display: flex; align-items: center; white-space: nowrap; font-size: 14.2px; }
	.tree-row.lv1 { padding-left: 25px; }
	.tree-ch { width: 24px; flex: none; display: flex; justify-content: center; padding-right: 2px; box-sizing: border-box; }
	.tree-l { margin-left: 8px; }

	.search-row { height: 21px; margin: 5px 0 12px; display: flex; align-items: center; gap: 5px; }
	.search-combo { width: 115px; height: 21px; box-sizing: border-box; border: 1px solid #8a8a8a; background: #fff; display: flex; align-items: center; padding: 0 7px 0 3px; }
	.grow { flex: 1; }
	.err-row { height: 33px; flex: none; display: flex; align-items: center; padding: 0 0 5px 3px; font-size: 13.5px; box-sizing: border-box; }
	.nav-circ { width: 14px; height: 14px; border: 1px solid #b5b5b5; border-radius: 50%; font-size: 10px; line-height: 13px; text-align: center; color: #888; margin-right: 8px; flex: none; font-family: 'DejaVu Sans', sans-serif; }
	.err-txt { margin-left: 2px; white-space: nowrap; }
	.nav-circ.fwd { margin-left: 16px; margin-right: 12px; }
	.more { color: #555; font-size: 13px; }

	.log-box { height: 204px; width: 147px; margin-left: -1px; border-bottom: 2px solid #777; }
	.gutter { width: 40px; background: #f0f0f0; flex: none; font: 13.3px/16px 'Liberation Mono', monospace; color: #333; padding: 1px 0 0 8px; box-sizing: border-box; }
	.log-body { width: 86px; flex: none; overflow: hidden; white-space: pre; font: 13.3px/16px 'Liberation Mono', monospace; padding: 1px 0 0 3px; box-sizing: border-box; }
	.log-body div { height: 16px; }
	.gutter div { height: 16px; }
	.blue { color: #0000e6; }

	/* scrollbars */
	.vbar { width: 19px; flex: none; display: flex; flex-direction: column; background: #f0f0f0; }
	.hbar { height: 19px; flex: none; display: flex; background: #f0f0f0; }
	.sb-btn { width: 19px; height: 19px; flex: none; display: flex; align-items: center; justify-content: center; }
	.sb-track { flex: 1; position: relative; min-width: 0; min-height: 0; }
	.vthumb { position: absolute; left: 0; right: 0; background: #cdcdcd; }
	.hthumb { position: absolute; top: 0; bottom: 0; background: #cdcdcd; }

	/* center */
	.center { width: 1275px; flex: none; display: flex; flex-direction: column; padding-left: 5px; box-sizing: border-box; }
	.tabs { height: 28px; flex: none; display: flex; align-items: flex-end; }
	.tab { width: 79px; height: 24px; background: #f0f0f0; display: flex; align-items: center; font-size: 12.5px; box-sizing: border-box; padding: 0 0 2px 13px; gap: 14px; border-top: 1px solid #e0e0e0; border-left: 1px solid #e0e0e0; }
	.tab b { font-weight: 700; font-size: 15px; color: #333; line-height: 1; font-family: 'Liberation Sans', sans-serif; }
	.tab.cur { width: 82px; height: 28px; background: #fff; padding-left: 16px; border: none; gap: 16px; margin-bottom: -1px; position: relative; }
	.frame { width: 1265px; height: 854px; box-sizing: border-box; border: 1px solid #9a9a9a; background: #f0f0f0; display: flex; flex-direction: column; }
	.frame-row { flex: none; height: 832px; display: flex; }
	.canvas { width: 1244px; height: 832px; flex: none; background: #fff; position: relative; overflow: hidden; }
	.plane { position: absolute; left: -156px; top: -144px; width: 1500px; height: 1100px; }
	.wires { position: absolute; left: 0; top: 0; }
	.sel-bg { position: absolute; left: 879px; top: 531px; width: 122px; height: 79px; background: #cfe1f6; border-radius: 3px; }
	.mini-tb { position: absolute; left: 882px; top: 512px; width: 29px; height: 15px; background: #eef0ea; border: 1px solid #dcdcd4; box-sizing: border-box; display: flex; align-items: center; justify-content: center; gap: 1px; }

	.node { position: absolute; font-family: 'Liberation Sans', sans-serif; }
	.head {
		position: relative;
		height: 17px;
		box-sizing: border-box;
		background: linear-gradient(#96bde8, #7fabdc);
		border: 1px solid #2f4a60;
		border-radius: 5px;
		display: flex;
		align-items: center;
		padding: 0 3px 0 2px;
		font-size: 10.8px;
		letter-spacing: -0.75px;
		color: #0c1620;
		white-space: nowrap;
	}
	.head.sel { border-width: 2px; border-color: #37414a; border-radius: 3px; }
	.name { flex: 1; min-width: 0; }
	.ngear { flex: none; }
	.in-tip { position: absolute; left: -7px; top: 2px; display: block; line-height: 0; }
	.port {
		position: relative;
		height: 14.3px;
		margin: 0 11px;
		box-sizing: border-box;
		background: #b2cfee;
		border: 1px solid #2f4a60;
		border-radius: 5px;
		display: flex;
		align-items: center;
		font-size: 9.6px;
		letter-spacing: -0.7px;
		color: #34485c;
		white-space: nowrap;
		padding-left: 4px;
	}
	.port.inport { padding-left: 5px; }
	.plabel { flex: 1; min-width: 0; margin-left: 3px; }
	.tri-r { width: 0; height: 0; border: 3.5px solid transparent; border-left: 5px solid #7d93a8; border-right: 0; flex: none; }
	.tri-d { width: 0; height: 0; border: 3.5px solid transparent; border-top: 5px solid #7d93a8; border-bottom: 0; flex: none; margin-left: 0; }
	.tip { position: absolute; right: -8px; top: 1px; display: block; }
	.insp { flex: none; margin-right: -1px; }
	.count { position: absolute; left: calc(100% + 12px); top: -1px; font-size: 10.5px; letter-spacing: 0; color: #111; }
	.dot { position: absolute; left: calc(100% + 10px); top: 4px; width: 4px; height: 4px; border-radius: 50%; background: #000; }
	.red { position: absolute; left: -6px; top: 2px; border: 4px solid transparent; border-left: 6px solid #c8232c; border-right: 0; }
	.attr {
		height: 13.5px;
		margin: 0 15px 0 16px;
		box-sizing: border-box;
		background: #d3d3d3;
		border: 1px solid #4b5560;
		border-width: 0 1px 1px;
		font-size: 9.3px;
		letter-spacing: -0.2px;
		line-height: 12px;
		padding-left: 4px;
		color: #3f3f3f;
		white-space: nowrap;
	}

	.src { position: absolute; left: 183px; top: 508px; width: 126px; height: 64px; font-family: 'Liberation Sans', sans-serif; }
	.src-circle { position: absolute; left: 0; top: 0; width: 26px; height: 26px; box-sizing: border-box; border-radius: 50%; background: #fbd38d; border: 1px solid #5b4a28; display: flex; align-items: center; justify-content: center; z-index: 1; }
	.src-head { position: absolute; left: 22px; top: 5px; width: 97px; height: 17px; box-sizing: border-box; background: #fbd38d; border: 1px solid #6b5a34; border-radius: 0 5px 5px 0; display: flex; align-items: center; padding: 0 1px 0 6px; font-size: 11px; color: #111; }
	.src-name { flex: 1; margin-left: 3px; }
	.src-tri { border-top-color: #8a7b5c; }
	.src-attrs { position: absolute; left: 26px; top: 22px; width: 77px; box-sizing: border-box; background: #d3d3d3; border: 1px solid #55595e; border-top: 0; border-radius: 0 0 4px 4px; font-size: 9.3px; letter-spacing: -0.2px; color: #3f3f3f; }
	.src-attrs div { height: 14px; line-height: 13px; padding-left: 4px; border-bottom: 1px solid #bdbdbd; box-sizing: border-box; }

	.wlabel { position: absolute; transform: translate(-50%, -50%); background: #fff; padding: 0 3px; font: 10.8px/12px 'Liberation Sans', sans-serif; color: #111; }

	/* right dock */
	.right { flex: 1; min-width: 0; box-sizing: border-box; padding: 2px 2px 0 4px; display: flex; flex-direction: column; position: relative; }
	.vp-tools { height: 21px; margin: 5px 0 0; display: flex; align-items: center; padding-left: 2px; }
	.vp-b { width: 23px; height: 21px; display: flex; align-items: center; justify-content: center; box-sizing: border-box; flex: none; }
	.vp-b.on { background: #bbdcf5; outline: 1px solid #7fb4dd; outline-offset: -1px; }
	.vsep { width: 1px; height: 20px; background: #d5d5d5; margin: 0 7px 0 3px; flex: none; }

	.group { position: relative; box-sizing: border-box; border: 1px solid #dcdcdc; width: 489px; }
	.legend { position: absolute; left: 5px; top: -11px; background: #f0f0f0; padding: 0 3px; font-size: 13px; line-height: 20px; }
	.gfx-legend { top: -12px; }
	.table-group { height: 262px; margin-top: 17px; padding: 14px 4px 0 5px; }
	.tbl-top { display: flex; justify-content: space-between; align-items: center; height: 25px; }
	.combo { display: flex; align-items: center; justify-content: space-between; box-sizing: border-box; padding: 0 6px 0 5px; font-size: 13.4px; }
	.combo.white { width: 378px; height: 22px; background: #fff; border: 1px solid #8a8a8a; }
	.col-btn { width: 91px; height: 25px; box-sizing: border-box; border: 1px solid #b5b5b5; background: #e6e6e6; text-align: center; font-size: 13px; line-height: 23px; margin-right: 1px; }
	.tbl { height: 177px; margin-top: 10px; width: 479px; box-sizing: border-box; border: 1px solid #8a8a8a; background: #f0f0f0; display: flex; flex-direction: column; }
	.tbl-row2 { flex: 1; min-height: 0; display: flex; }
	.tbl-main { flex: 1; min-width: 0; overflow: hidden; }
	.tr { display: flex; height: 30px; box-sizing: border-box; border-bottom: 1px solid #fff; white-space: nowrap; overflow: hidden; background: #fff; }
	.tr.th { height: 29px; border: none; font-weight: 700; font-size: 14px; }
	.tr.alt { background: #e8e7e3; }
	.tr.stub { height: 8px; border: none; }
	.tr span { display: flex; align-items: center; box-sizing: border-box; font-size: 13.8px; flex: none; padding-left: 3px; border-left: 1px solid #dedede; }
	.rn { width: 28px; background: #fff; font-weight: 700; font-size: 15px !important; border-left: none !important; padding-left: 6px !important; }
	.c1 { width: 136px; }
	.c2 { width: 177px; }
	.c3 { width: 116px; }
	.th .c1, .th .c2, .th .c3 { padding-left: 4px; border-left: 1px solid #f1f1f1; font-weight: 700; }
	.miss { color: #9a9a9a; }
	.tbl-search { display: flex; align-items: center; height: 23px; margin-top: 7px; }
	.search-in { width: 196px; height: 23px; box-sizing: border-box; border: 1px solid #8a8a8a; background: #fff; display: flex; align-items: center; padding-left: 3px; }
	.in { margin: 0 7px 0 8px; font-size: 13.5px; }
	.combo.gray { width: 195px; height: 21px; background: #dcdcdc; border: 1px solid #b8b8b8; }
	.rows { margin-left: 10px; font-size: 13.1px; white-space: nowrap; }

	.gfx-group { height: 539px; margin-top: 17px; padding: 13px 0 0 5px; }
	.gfx-tb { height: 41px; display: flex; }
	.gtool { flex: none; display: flex; flex-direction: column; align-items: center; white-space: nowrap; font-size: 12.6px; line-height: 18px; padding-top: 2px; box-sizing: border-box; }
	.gtool.on { background: #bbdcf5; outline: 1px solid #7fb4dd; outline-offset: -1px; }
	.gtool.off { color: #8c8c8c; }
	.gmore { margin-left: auto; margin-right: 5px; align-self: center; }
	.view { width: 474px; height: 436px; margin: 5px 0 0 1px; box-sizing: border-box; border: 1px solid #8a9294; background: linear-gradient(#fff 0, #fff 53%, #c6d0d1 100%); }
	.view svg { display: block; }
	.coord { height: 41px; padding-top: 2px; display: flex; align-items: center; font-size: 13.9px; white-space: nowrap; }
	.coord span { height: 27px; display: flex; align-items: center; box-sizing: border-box; border-right: 1px solid #d8d8d8; flex: none; }
	.c-x { width: 23px; padding-left: 6px; }
	.c-v { width: 66px; padding-left: 4px; letter-spacing: 1.25px; }
	.c-y { width: 25px; padding-left: 9px; }
	.c-sys { width: 196px; padding-left: 4px; }
	.coord .c-u { border: none; padding-left: 4px; }

	.scribble { position: absolute; left: 1820px; top: 390px; }
</style>
